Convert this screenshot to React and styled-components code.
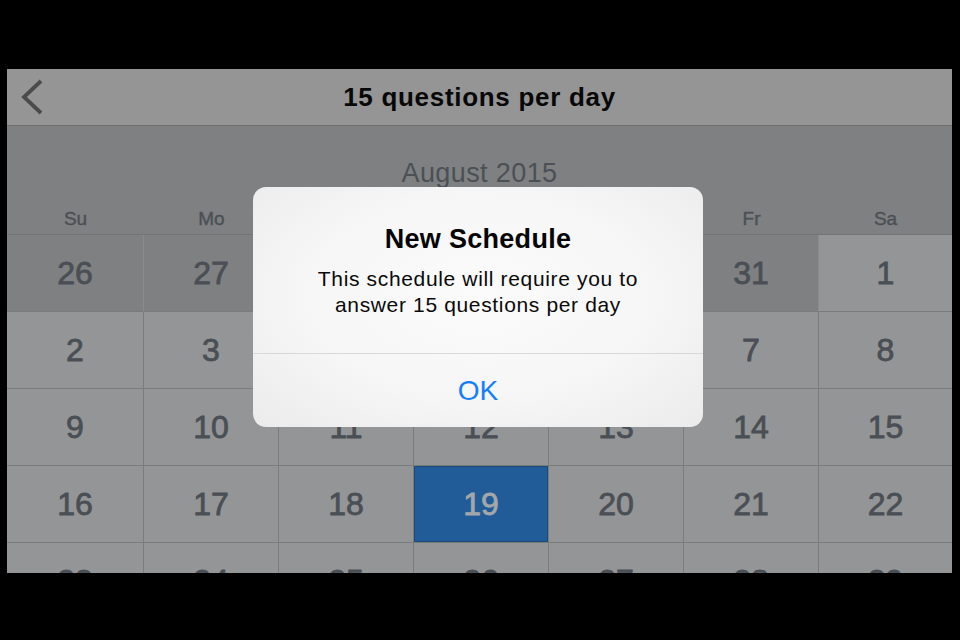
import React from "react";
import styled, { createGlobalStyle } from "styled-components";

const Global = createGlobalStyle`
  html, body { margin: 0; padding: 0; background: #000; }
  body { font-family: "Liberation Sans", Arial, Helvetica, sans-serif; }
  #root { width: 960px; height: 640px; }
`;

const COLUMNS = "137px repeat(5, 135px) 133px";

const Stage = styled.div`
  width: 960px;
  height: 640px;
  box-sizing: border-box;
  padding: 69px 8px 0 7px;
  background: #000;
`;

const Screen = styled.div`
  position: relative;
  width: 945px;
  height: 504px;
  overflow: hidden;
  background: #7f8081;
  display: flex;
  flex-direction: column;
`;

const NavBar = styled.header`
  flex: none;
  height: 56px;
  background: #959595;
  border-bottom: 1px solid #6e6e6e;
  display: grid;
  grid-template-columns: 60px 1fr 60px;
  align-items: center;
`;

const BackButton = styled.button`
  border: 0;
  background: none;
  padding: 0 0 0 13px;
  height: 56px;
  display: flex;
  align-items: center;
  cursor: pointer;
`;

const NavTitle = styled.h1`
  margin: 0;
  text-align: center;
  font-size: 26px;
  line-height: 32px;
  font-weight: 700;
  letter-spacing: 0.7px;
  color: #080808;
`;

const MonthSection = styled.section`
  flex: none;
  height: 108px;
  box-sizing: border-box;
  padding: 31px 0 3px;
  display: flex;
  flex-direction: column;
`;

const MonthTitle = styled.div`
  text-align: center;
  font-size: 27px;
  line-height: 32px;
  letter-spacing: 0.4px;
  color: #4b5056;
`;

const WeekRow = styled.div`
  margin-top: 18px;
  display: grid;
  grid-template-columns: ${COLUMNS};
`;

const WeekDay = styled.div`
  text-align: center;
  font-size: 19px;
  line-height: 24px;
  color: #4b5056;
  -webkit-text-stroke: 0.4px #4b5056;
`;

const Grid = styled.div`
  display: grid;
  grid-template-columns: ${COLUMNS};
  border-top: 1px solid #737475;
`;

const Cell = styled.div`
  height: 76px;
  box-sizing: content-box;
  display: flex;
  align-items: center;
  justify-content: center;
  font-size: 32px;
  color: ${(p) => (p.$selected ? "#a4a7aa" : "#4a4f55")};
  -webkit-text-stroke: 0.8px ${(p) => (p.$selected ? "#a4a7aa" : "#4a4f55")};
  background: ${(p) =>
    p.$selected ? "#215c98" : p.$outside ? "#7f8081" : "#949596"};
  border-right: 1px solid ${(p) => (p.$outside ? "#8a8b8c" : "#7b7c7d")};
  border-bottom: 1px solid ${(p) => (p.$outside ? "#7a7b7c" : "#7b7c7d")};
  box-shadow: ${(p) => (p.$selected ? "inset 0 0 0 1px #194a7c" : "none")};
  &:nth-child(7n) {
    border-right: 0;
  }
`;

const Overlay = styled.div`
  position: absolute;
  inset: 0;
  display: flex;
  justify-content: center;
  align-items: flex-start;
  padding-top: 118px;
  box-sizing: border-box;
`;

const Alert = styled.div`
  width: 450px;
  height: 240px;
  border-radius: 13px;
  background: radial-gradient(ellipse at 50% 45%, #fbfbfb 0%, #f6f6f6 55%, #ebebeb 100%);
  display: flex;
  flex-direction: column;
  overflow: hidden;
  margin-left: -3px;
`;

const AlertBody = styled.div`
  padding: 36px 20px 35px;
  text-align: center;
  border-bottom: 1px solid #d9d9d9;
`;

const AlertTitle = styled.h2`
  margin: 0;
  font-size: 27px;
  line-height: 32px;
  font-weight: 700;
  letter-spacing: 0.3px;
  color: #050505;
`;

const AlertMessage = styled.p`
  margin: 11px 0 0;
  font-size: 21px;
  line-height: 26px;
  letter-spacing: 0.65px;
  color: #0a0a0a;
`;

const AlertButton = styled.button`
  flex: 1;
  border: 0;
  background: none;
  font-family: inherit;
  font-size: 28px;
  color: #147efb;
  cursor: pointer;
  padding: 0;
`;

const weekdays = ["Su", "Mo", "Tu", "We", "Th", "Fr", "Sa"];

const days = [
  { n: 26, outside: true },
  { n: 27, outside: true },
  { n: 28, outside: true },
  { n: 29, outside: true },
  { n: 30, outside: true },
  { n: 31, outside: true },
  { n: 1 },
];
for (let d = 2; d <= 29; d++) days.push({ n: d, selected: d === 19 });

export default function App() {
  return (
    <Stage>
      <Global />
      <Screen>
        <NavBar>
          <BackButton aria-label="Back">
            <svg width="26" height="38" viewBox="0 0 26 38">
              <polyline
                points="21,3 4,19 21,35"
                fill="none"
                stroke="#4b4b4b"
                strokeWidth="3.8"
                strokeLinecap="butt"
                strokeLinejoin="miter"
              />
            </svg>
          </BackButton>
          <NavTitle>15 questions per day</NavTitle>
          <span />
        </NavBar>
        <MonthSection>
          <MonthTitle>August 2015</MonthTitle>
          <WeekRow>
            {weekdays.map((w) => (
              <WeekDay key={w}>{w}</WeekDay>
            ))}
          </WeekRow>
        </MonthSection>
        <Grid>
          {days.map((d) => (
            <Cell key={d.n + (d.outside ? "o" : "")} $outside={d.outside} $selected={d.selected}>
              {d.n}
            </Cell>
          ))}
        </Grid>
        <Overlay>
          <Alert role="alertdialog">
            <AlertBody>
              <AlertTitle>New Schedule</AlertTitle>
              <AlertMessage>
                This schedule will require you to
                <br />
                answer 15 questions per day
              </AlertMessage>
            </AlertBody>
            <AlertButton>OK</AlertButton>
          </Alert>
        </Overlay>
      </Screen>
    </Stage>
  );
}
